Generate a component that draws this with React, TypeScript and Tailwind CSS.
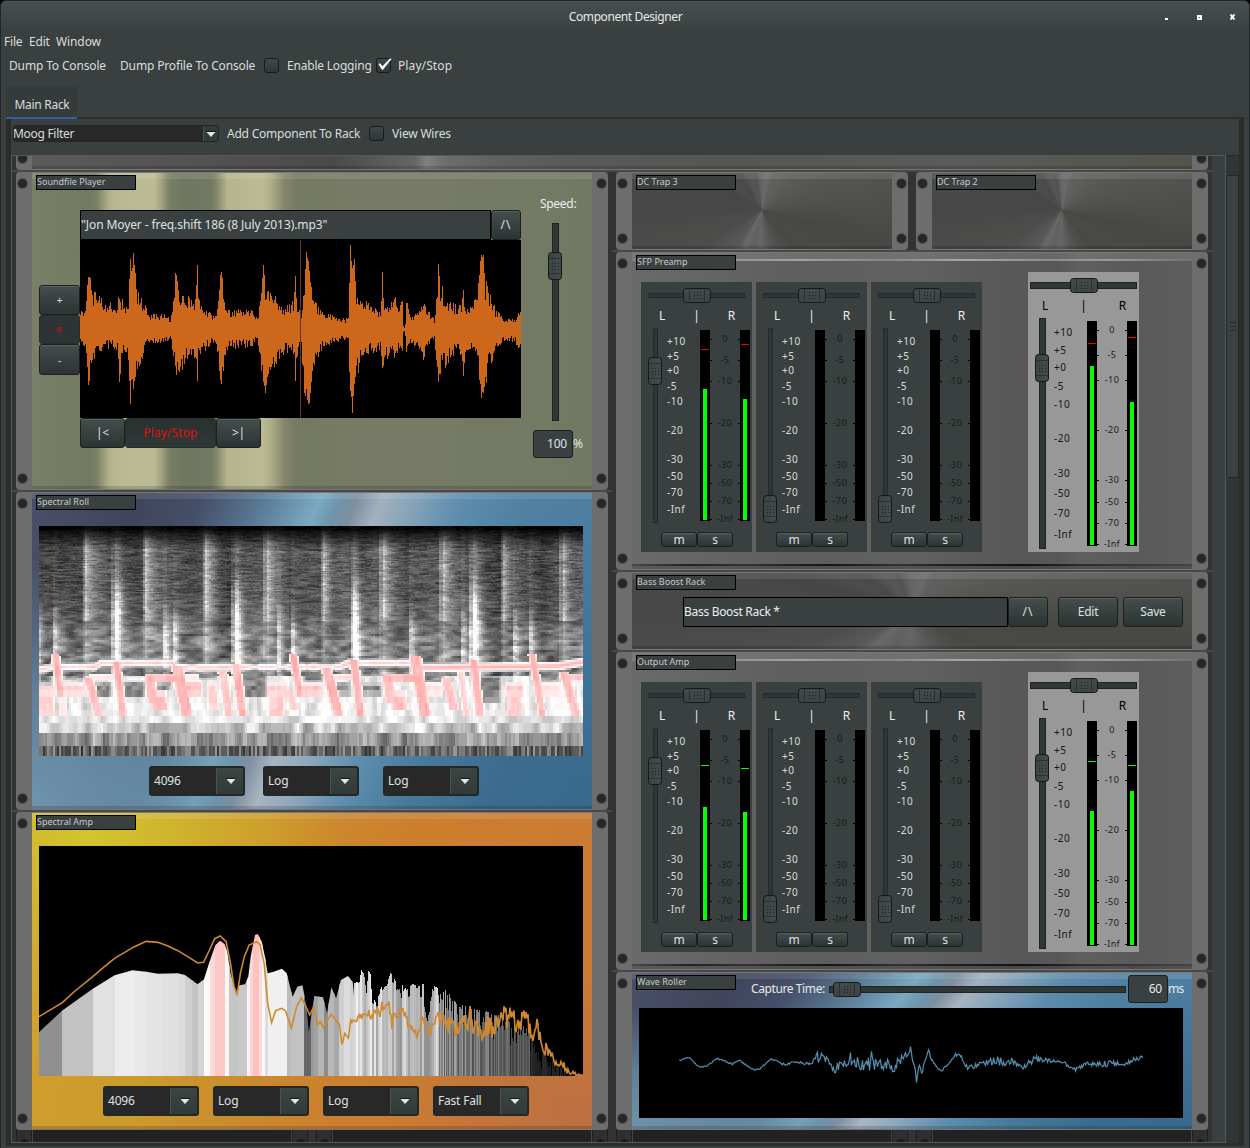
import React from "react";

/* ---------- deterministic noise ---------- */
function hash(a: number, b = 0) {
  const s = Math.sin(a * 127.1 + b * 311.7 + 17.3) * 43758.5453;
  return s - Math.floor(s);
}
function smoothNoise(x: number, y: number) {
  const xi = Math.floor(x);
  const yi = Math.floor(y);
  const fx = x - xi;
  const fy = y - yi;
  const a = hash(xi, yi) * (1 - fx) + hash(xi + 1, yi) * fx;
  const b = hash(xi, yi + 1) * (1 - fx) + hash(xi + 1, yi + 1) * fx;
  return a * (1 - fy) + b * fy;
}
function lerpPoints(pts: number[][], x: number, k = 1) {
  if (x <= pts[0][0]) return pts[0][k];
  for (let i = 1; i < pts.length; i++) {
    if (x <= pts[i][0]) {
      const a = pts[i - 1];
      const b = pts[i];
      return a[k] + ((b[k] - a[k]) * (x - a[0])) / (b[0] - a[0]);
    }
  }
  return pts[pts.length - 1][k];
}

/* ---------- basic controls ---------- */
const dots = [0, 1, 2];

function Thumb({ vertical = false }: { vertical?: boolean }) {
  return (
    <svg width={vertical ? 14 : 28} height={vertical ? 28 : 15} className="block">
      <g transform={vertical ? "translate(14 0) rotate(90)" : ""}>
        <rect x="0.5" y="0.5" width="27" height={vertical ? 13 : 14} rx="3" fill="#3d4545" stroke="#161919" />
        <rect x="1.5" y="1.5" width="25" height="5" rx="2" fill="#48514f" opacity="0.55" />
        <path d="M6.5 1.5V13M21.5 1.5V13" stroke="#2b3131" />
        {dots.map((r) =>
          [0, 1, 2].map((c) => (
            <rect key={r + "-" + c} x={11 + c * 3} y={(vertical ? 3 : 4) + r * 3} width="1" height="1" fill="#1d2121" />
          )),
        )}
      </g>
    </svg>
  );
}

function HSlider({ width, thick, at, dim }: { width: number; thick: number; at: number; dim?: boolean }) {
  return (
    <div className="relative flex h-[15px] shrink-0 items-center" style={{ width }}>
      <div
        className={"w-full border " + (dim ? "border-[#242929] bg-[#303636]" : "border-[#1e2323] bg-[#2f3737]")}
        style={{ height: thick }}
      />
      <div className="absolute top-0" style={{ left: at }}>
        <Thumb />
      </div>
    </div>
  );
}

function VSlider({ height, thick, at, dim }: { height: number; thick: number; at: number; dim?: boolean }) {
  return (
    <div className="relative flex w-[14px] shrink-0 justify-center" style={{ height }}>
      <div
        className={"h-full border " + (dim ? "border-[#242929] bg-[#303636]" : "border-[#1e2323] bg-[#2f3737]")}
        style={{ width: thick }}
      />
      <div className="absolute left-0" style={{ top: at }}>
        <Thumb vertical />
      </div>
    </div>
  );
}

function Btn({ children, className = "" }: { children: React.ReactNode; className?: string }) {
  return (
    <div
      className={
        "flex shrink-0 items-center justify-center rounded-[3px] border border-[#1b1f1f] bg-linear-to-b from-[#454d4d] via-[#384040] to-[#2d3434] text-[#dfe2e2] shadow-[inset_0_1px_0_#596262] " +
        className
      }
    >
      {children}
    </div>
  );
}

function Caret() {
  return (
    <svg width="10" height="6" className="block">
      <path d="M0 0.5H10L5 6Z" fill="#e2e6e4" />
      <path d="M0 0.5H10" stroke="#151818" />
    </svg>
  );
}

function Combo({ text }: { text: string }) {
  return (
    <div className="flex h-[30px] w-[96px] shrink-0 overflow-hidden rounded-[3px] border-2 border-[#222828] bg-[#282828] text-[#dfe2e2]">
      <div className="flex w-[65px] items-center pl-[3px]">{text}</div>
      <div className="flex flex-1 items-center justify-center border-l border-[#4a5252] bg-linear-to-b from-[#3c4444] to-[#333a3a] pl-px">
        <Caret />
      </div>
    </div>
  );
}

function CheckBox({ on = false }: { on?: boolean }) {
  return (
    <div className="relative h-[15px] w-[15px] shrink-0 rounded-[3px] border border-[#181b1b] bg-linear-to-b from-[#3f4747] to-[#303737]">
      {on && (
        <svg width="17" height="14" className="absolute -top-[1px] left-0 overflow-visible">
          <path d="M1.5 6L3.2 5.2L5.4 8.3L12.6 0.8H14.8L6 11.8H4.8Z" fill="#fff" />
        </svg>
      )}
    </div>
  );
}

/* ---------- rack module frame ---------- */
function Hole() {
  return <div className="h-[9px] w-[9px] rounded-full bg-[#262626] shadow-[0_0_0_1px_#555]" />;
}

function Ear({ right = false }: { right?: boolean }) {
  return (
    <div
      className={
        "flex w-4 shrink-0 flex-col items-center justify-between bg-[#6d6d6d] pt-[7px] pb-[7px] " +
        (right ? "rounded-r-[4px] pl-[2px]" : "rounded-l-[4px] pr-[3px]")
      }
    >
      <Hole />
      <Hole />
    </div>
  );
}

function Module({
  title,
  span,
  back,
  children,
}: {
  title?: string;
  span: string;
  back: React.ReactNode;
  children?: React.ReactNode;
}) {
  return (
    <div className={"flex border-t-2 border-[#484848] px-1 " + span}>
      <Ear />
      <div className="relative min-w-0 flex-1 overflow-hidden border-y border-[#777]">
        <div className="absolute inset-0 overflow-hidden">{back}</div>
        <div className="absolute inset-x-0 top-0 h-[6px] bg-white/10" />
        <div className="absolute inset-x-0 bottom-0 h-[3px] bg-black/15" />
        <div className="relative h-full">{children}</div>
        {title && (
          <div className="absolute top-[2px] left-1 h-[15px] w-[100px] border border-black bg-[#3a4040] text-[9px] leading-[12px] tracking-[0px] text-[#c6caca]">
            {title}
          </div>
        )}
      </div>
      <Ear right />
    </div>
  );
}

function BayRail() {
  return (
    <div className="flex w-4 justify-center border-x border-[#202020] bg-[#2f2f2f] pt-[9px]">
      <div className="h-[9px] w-[9px] rounded-full bg-[#1c1c1c]" />
    </div>
  );
}

function Bay() {
  return (
    <div className="flex px-1">
      <BayRail />
      <div className="flex-1 border-x border-[#454545] bg-[#222]" />
      <BayRail />
    </div>
  );
}

/* ---------- panel backgrounds ---------- */
const conic =
  "bg-[conic-gradient(from_0deg_at_50%_49%,#666_0deg,#6a6a6a_10deg,#606060_16deg,#5e5e5c_30deg,#5a5a57_45deg,#555552_65deg,#51514e_80deg,#4b4b47_95deg,#474744_105deg,#4a4a46_125deg,#484845_140deg,#4e4e4b_155deg,#585856_168deg,#666_182deg,#606060_192deg,#686868_206deg,#585858_215deg,#555_225deg,#4d4d4c_238deg,#4c4b4a_255deg,#474747_270deg,#494949_285deg,#464646_300deg,#4c4c4c_315deg,#4a4a4a_328deg,#565656_340deg,#525252_350deg,#606060_356deg,#666_360deg)]";
const Conic = () => <div className={"h-full w-full " + conic} />;
const ConicWide = () => <div className={"h-full w-[260px] origin-left scale-x-[2.154] " + conic} />;
const Sheen = () => (
  <div className="h-full w-full bg-[linear-gradient(to_right,#5c5a5b_0%,#545253_14%,#4b494a_26%,#5a5a5a_30%,#666_33%,#808080_34%,#6e6e6e_35.5%,#616161_40%,#5a5a59_46%,#565652_60%,#5b5b59_80%,#54544c_100%)]" />
);
const Olive = () => (
  <div className="h-full w-full bg-[linear-gradient(to_right,#7a8068_0px,#727a62_58px,#7b8167_65px,#b1b28a_77px,#b9ba93_88px,#bbbb95_122px,#a3a481_129px,#787d63_138px,#6f7761_155px,#737961_178px,#7d8166_183px,#b3b48c_195px,#bbbb95_230px,#abab87_240px,#84876b_252px,#757a63_264px,#777b65_360px,#727962_560px)]" />
);
const Blue = () => (
  <div className="relative h-full w-full bg-[linear-gradient(112.4deg,#4a5069_0%,#40455b_16%,#454f69_25%,#577590_33%,#7aa9c0_42%,#6f94ab_45%,#7f8fa1_47.5%,#a9b4c1_51%,#8ea8bb_56%,#5f8eae_63%,#47799a_73%,#3b6c8f_85%,#376a8d_100%)]">
    <div className="absolute inset-0 bg-[radial-gradient(ellipse_40%_80%_at_0%_100%,#6f94ac_0%,#6a8fa8cc_45%,transparent_100%)]" />
    <div className="absolute inset-0 bg-[radial-gradient(ellipse_45%_90%_at_100%_0%,#5a8aaa_0%,transparent_100%)] opacity-60" />
  </div>
);
const BlueShort = () => (
  <div className="relative h-[316px] w-full origin-top scale-y-[0.5]">
    <Blue />
  </div>
);
const Amber = () => (
  <div className="relative h-full w-full bg-[linear-gradient(105deg,#cfa02d_0%,#cd9a2c_28%,#cb8a2d_45%,#cc7f2e_60%,#c97a34_100%)]">
    <div className="absolute inset-0 bg-[radial-gradient(ellipse_45%_75%_at_10%_8%,#d2c52f_0%,#d0b92e88_50%,transparent_100%)]" />
    <div className="absolute inset-0 bg-[radial-gradient(ellipse_35%_45%_at_97%_95%,#bd6f42_0%,transparent_100%)]" />
  </div>
);
const Brushed = () => (
  <div className="relative h-full w-full bg-[linear-gradient(to_right,#6a6a6a_0%,#656565_12%,#5e5e5e_30%,#616161_50%,#595959_64%,#575757_76%,#606060_80%,#5a5a5a_90%,#5e5e5e_100%)]">
    <div className="absolute inset-x-0 top-[6px] h-[2px] bg-[linear-gradient(to_right,#808080,#a2a2a2_30%,#868686_45%,#a8a8a8_60%,#8c8c8c_75%,#9c9c9c_85%,#707070)]" />
    <div className="absolute inset-x-0 bottom-[3px] h-[2px] bg-[linear-gradient(to_right,#4a4a4a,#222_10%,#333_20%,#151515_35%,#333_48%,#222_55%,#111_70%,#2c2c2c_80%,#444_100%)]" />
  </div>
);

/* ---------- drawings ---------- */
const playerEnv: number[][] = [
  [0, 14, 15], [5, 22, 18], [8, 55, 58], [10, 53, 48], [12, 34, 40], [15, 36, 26], [19, 28, 20], [24, 25, 17], [33, 25, 17], [37, 20, 19],
  [39, 44, 55], [41, 26, 22], [46, 20, 20], [48, 28, 30], [50, 72, 82], [51, 50, 52], [53, 79, 61], [55, 62, 52], [57, 32, 38], [60, 28, 30],
  [63, 24, 24], [69, 12, 12], [80, 13, 13], [88, 13, 11], [90, 6, 6], [92, 18, 18], [95, 55, 44], [97, 53, 50], [99, 34, 38], [106, 29, 30],
  [115, 25, 27], [117, 64, 58], [118, 30, 28], [122, 22, 22], [132, 12, 12], [137, 18, 20], [139, 48, 40], [141, 62, 57],
  [143, 30, 40], [146, 18, 18], [160, 18, 16], [170, 17, 16], [177, 11, 10], [180, 30, 26], [183, 63, 60], [185, 45, 68], [187, 36, 42],
  [195, 30, 32], [203, 17, 22], [211, 24, 18], [213, 26, 22], [215, 54, 48], [217, 24, 24], [221, 16, 16], [224, 44, 64], [226, 80, 68], [228, 69, 83],
  [231, 42, 60], [234, 25, 30], [240, 16, 20], [250, 13, 13], [265, 9, 10], [268, 12, 10], [270, 83, 66], [272, 66, 87], [274, 74, 58],
  [276, 30, 45], [280, 29, 31], [290, 21, 20], [300, 17, 20], [302, 56, 43], [304, 24, 30], [309, 22, 22], [313, 26, 24], [315, 42, 36], [317, 20, 20],
  [322, 26, 20], [323, 4, 4], [324, 1, 2], [325, 4, 6], [326, 26, 20], [330, 13, 15], [338, 14, 15], [343, 27, 28], [350, 14, 14], [354, 8, 9], [356, 30, 30], [358, 65, 58],
  [360, 44, 42], [365, 31, 33], [375, 21, 20], [380, 22, 24], [383, 33, 43], [386, 18, 18], [395, 26, 23], [398, 50, 42], [401, 79, 68],
  [403, 74, 72], [405, 44, 54], [408, 34, 36], [415, 18, 20], [422, 10, 12], [427, 9, 10], [435, 10, 11], [438, 17, 20], [441, 17, 12],
];

function PlayerWave() {
  let d = "";
  for (let x = 0; x < 441; x++) {
    const a = lerpPoints(playerEnv, x, 1);
    const b = lerpPoints(playerEnv, x, 2);
    const up = a > 50 ? a * (0.9 + 0.12 * hash(x, 1)) : a * (0.64 + 0.56 * hash(x, 1));
    const dn = b > 50 ? b * (0.88 + 0.14 * hash(x, 2)) : b * (0.64 + 0.56 * hash(x, 2));
    d += `M${x} ${Math.round(Math.max(3, 89 - up))}h1V${Math.round(Math.min(177, 89 + dn))}h-1z`;
  }
  return (
    <svg width="441" height="178" className="block bg-black" shapeRendering="crispEdges">
      <path d={d} fill="#cd671c" />
      <rect x="220" y="0" width="1" height="178" fill="#6b3230" />
    </svg>
  );
}

const highBeats = [47, 107, 167, 228, 285, 344.5, 404, 465, 524.5];
const lowBeats = [76.5, 196, 315, 433.5];
const shortBeats = [0, 16, 127, 137, 240, 254, 373, 425, 477, 492];
/* x0, x1, y0, y1, drift, strength */
const pinks: number[][] = [
  [-3, 16, 160, 168, 0, 0.55], [-3, 14, 168, 188, 2, 0.65], [13, 20, 130, 166, 5, 1], [18, 46, 158, 168, 0, 0.65], [20, 28, 168, 188, 0, 0.3],
  [45, 54, 154, 194, 12, 0.85], [50, 78, 149, 154, 0, 0.3], [74, 81, 138, 192, 7, 1], [106, 140, 148, 157, 0, 0.95], [106, 116, 156, 176, 3, 0.85],
  [110, 126, 167, 182, 3, 0.85], [133, 144, 142, 196, 11, 1], [142, 163, 157, 168, 0, 0.85], [142, 160, 149, 155, 0, 0.25], [168, 177, 158, 181, 2, 0.6],
  [180, 188, 148, 188, 6, 0.75], [193, 201, 140, 190, 7, 1], [228, 248, 158, 168, 0, 0.7], [230, 245, 167, 189, 0, 0.65], [251, 258, 130, 166, 6, 1],
  [258, 284, 158, 168, 0, 0.8], [247, 255, 164, 186, 4, 0.6], [283, 293, 144, 194, 13, 1], [290, 315, 149, 154, 0, 0.5], [311, 319, 136, 192, 7, 1],
  [344, 377, 148, 157, 0, 0.95], [344, 354, 156, 176, 3, 0.85], [350, 366, 167, 182, 3, 0.8], [371, 382, 132, 196, 11, 1], [380, 404, 158, 168, 0, 0.4],
  [403, 412, 155, 184, 8, 0.8], [419, 425, 148, 188, 6, 0.6], [431, 439, 136, 190, 6, 1], [467, 484, 158, 168, 0, 0.75], [468, 482, 167, 189, 0, 0.65],
  [490, 497, 130, 190, 10, 1], [497, 521, 158, 168, 0, 0.45], [521, 530, 148, 194, 13, 0.9], [526, 547, 148, 155, 0, 0.8],
];
/* x0, x1, y0, y1 */
const shades: number[][] = [
  [0, 13, 147, 158], [25, 46, 145, 154], [52, 72, 157, 170], [84, 106, 156, 170], [82, 104, 142, 150], [112, 132, 142, 148], [114, 132, 157, 164],
  [156, 178, 145, 153], [203, 228, 148, 172], [264, 284, 145, 156], [290, 312, 157, 168], [322, 342, 158, 168], [322, 342, 143, 150], [380, 404, 147, 157], [440, 462, 150, 176], [500, 520, 146, 156],
];
const ridge: number[][] = [[0, 144], [15, 141], [56, 141], [62, 137], [134, 137], [138, 142], [215, 141], [300, 141], [310, 137], [372, 137], [376, 142], [520, 140], [544, 136]];

/* 0 to 1 runs black to white, 1 to 2 runs white to pink */
function intensity(x: number, y: number) {
  if (y >= 220) return 0.2 + 0.4 * hash(x, 220);
  if (y >= 207) return 0.36 + 0.34 * smoothNoise(x / 5, 207) + 0.14 * hash(x, 9);
  if (y >= 197) return 0.55 + 0.42 * smoothNoise(x / 7, 197) + 0.05 * hash(x, 3);
  if (y >= 190) return 0.76 + 0.27 * smoothNoise(x / 7, 190);
  let v: number;
  if (y < 150) {
    const blob = Math.max(0, Math.min(1, (y - 60) / 60));
    const fine = smoothNoise(x / 7, y * 1.1 + 40) * 0.6 + hash(x, y) * 0.25;
    const soft = smoothNoise(x / 8, y / 3.2 + 900);
    v = 0.13 + (1 - blob) * 0.42 * fine + blob * (0.17 * fine + 0.42 * soft);
    v += 0.16 * (smoothNoise(x / 14, 7) - 0.5);
    if (y > 100) v += 0.06;
    const n = smoothNoise(x / 3, y / 1.3);
    for (const b of highBeats) {
      const d = x - b;
      if (d > -4 && d < 22) v += (d < 0 ? 0.5 : Math.exp(-d / 8)) * (y < 95 ? 0.55 : 0.24) * (0.55 + 0.5 * n);
    }
    for (const b of lowBeats) {
      const d = x - b;
      if (d > -4 && d < 22)
        v += (d < 0 ? 0.5 : Math.exp(-Math.max(0, d - 3) / 5)) * (0.22 + Math.max(0, Math.min(1, (y - 45) / 35)) * 0.55) * (0.6 + 0.5 * n);
    }
    for (const b of shortBeats) {
      const d = x - b;
      if (d > -3 && d < 12) v += Math.exp(-Math.max(0, d - 1) / 3.4) * (0.06 + 0.36 * Math.max(0, Math.min(1, (y - 75) / 30))) * (0.5 + 0.6 * n);
    }
    v = Math.min(v, 1.06);
    if (y < 24) v *= y < 4 ? 0.06 : 0.12 + (0.88 * (y - 4)) / 20;
  } else {
    v = 0.76 + 0.36 * smoothNoise(x / 4, y / 14);
  }
  for (const [x0, x1, y0, y1] of shades) {
    const e = Math.min(x - x0, x1 - x, (y - y0) * 1.2, (y1 - y) * 1.2);
    if (e > -2) v = Math.min(v, 0.98 - Math.min(1, (e + 2) / 5) * (0.3 + 0.3 * smoothNoise(x / 5, y / 3)));
  }
  const r = Math.abs(y - lerpPoints(ridge, x));
  if (r < 5) {
    const strong = x > 373;
    const s = strong ? 1 : smoothNoise(x / 7, 31);
    const weak = x > 205 && x < 296 ? 0.7 + 0.3 * smoothNoise(x / 6, 77) : 1;
    v = Math.max(v, weak * Math.min(1.75, (1.35 - r / 5.5) * (0.95 + (strong ? 0.45 : s * 0.35))));
  }
  for (const [x0, x1, y0, y1, drift, s] of pinks) {
    if (y < y0 - 2 || y > y1 + 2) continue;
    const o = drift * ((y - y0) / (y1 - y0));
    const e = Math.min(x - x0 - o, x1 + o - x + 0, y - y0, y1 - y) + 1;
    const band = Math.min(x - x0 - o, x1 + o - x, (x1 - x0) / 2);
    const k = drift > 4 ? Math.min(x - x0 - o, x0 + (x1 - x0) + o - x, 99) + 1 : e;
    if (k > 0 && band > -1) v = Math.max(v, 1 + Math.min(1, k / 2.5) * s * (0.55 + 0.5 * smoothNoise(x / 3, y / 9)));
  }
  return v;
}

function SpectralRollPlot() {
  const buckets: string[] = [];
  let y = 0;
  while (y < 230) {
    const h = y < 100 ? 1 : y < 156 ? 2 : y < 164 ? 4 : y < 190 ? 6.5 : y < 197 ? 7 : y < 207 ? 10 : y < 220 ? 13 : 10;
    let start = 0;
    let last = -1;
    for (let x = 0; x <= 544; x += 2) {
      const k = x === 544 ? -2 : Math.max(0, Math.min(44, Math.round(intensity(x + 1, y + h / 2) * 22)));
      if (k !== last) {
        if (last >= 0) buckets[last] = (buckets[last] || "") + `M${start} ${y}H${x}v${h}H${start}z`;
        start = x;
        last = k;
      }
    }
    y += h;
  }
  return (
    <svg width="544" height="230" className="block bg-black" shapeRendering="crispEdges">
      {buckets.map((d, k) => {
        const c = Math.round((k / 22) * 255);
        const q = Math.round(255 - ((k - 22) / 22) * 92);
        return <path key={k} d={d} fill={k > 22 ? `rgb(255,${q},${q})` : `rgb(${c},${c},${c})`} />;
      })}
    </svg>
  );
}

const ampShape =
  "M99 828V697L157 632L235 566L290 526L335 511L370 515L400 521L450 520L468 525L485 540L500 553L516 538L530 485L545 435L557 422L568 432L575 455L583 520L597 580L605 556L620 553L628 530L634 470L645 405L652 402L662 425L670 470L677 520L690 516L713 506L725 520L740 590L752 560L765 556L775 620L781 697L788 640L795 588L817 592L827 640L838 562L850 595L862 540L880 528L892 546L896 598V828Z";
const ampBands: [number, string][] = [
  [99, "#909090"], [157, "#c2c2c2"], [235, "#e1e1e1"], [291, "#ececec"], [341, "#e8e8e8"], [370, "#e4e4e4"], [410, "#e0e0e0"], [450, "#dcdcdc"],
  [468, "#cfcfcf"], [486, "#c3c3c3"], [502, "#d4d4d4"], [516, "#fdfafa"], [531, "#ffd8d8"], [543, "#ffc8c8"], [569, "#fff6f6"], [580, "#c4c4c4"],
  [600, "#c8c8c8"], [625, "#fff4f4"], [632, "#ffd5d5"], [640, "#ffc0c0"], [656, "#ffdcdc"], [663, "#fff8f8"], [671, "#dddddd"], [677, "#f0f0f0"],
  [727, "#bbbbbb"], [737, "#c2c2c2"], [770, "#666666"], [786, "#9a9a9a"], [795, "#a2a2a2"], [805, "#b5b5b5"], [820, "#8c8c8c"], [830, "#b8b8b8"], [845, "#a8a8a8"], [858, "#d0d0d0"], [870, "#dcdcdc"], [884, "#d2d2d2"], [898, "#000"],
];
const ampTop: number[][] = [
  [896, 546], [908, 546], [914, 506], [922, 512], [927, 580], [930, 506], [936, 515], [940, 585], [950, 606], [964, 560], [978, 540], [988, 512], [1000, 535],
  [1012, 520], [1020, 570], [1040, 542], [1070, 545], [1080, 600], [1093, 543], [1115, 580], [1130, 568], [1150, 605], [1180, 618], [1230, 634], [1280, 650], [1330, 680], [1360, 735], [1400, 780], [1440, 822], [1474, 828],
];
const ampLine: number[][] = [
  [99, 650], [158, 608], [190, 573], [235, 530], [262, 502], [290, 475], [340, 440], [370, 424], [400, 427], [425, 438], [450, 452], [475, 470], [500, 489], [515, 487],
  [530, 450], [543, 416], [557, 408], [572, 425], [583, 490], [592, 560], [600, 583], [608, 520], [618, 470], [630, 435], [650, 425], [658, 435], [668, 490],
  [677, 610], [687, 668], [697, 632], [712, 625], [722, 632], [737, 685], [750, 620], [762, 594], [772, 615], [783, 645], [793, 622], [803, 675], [810, 665],
  [818, 683], [828, 660], [838, 643], [850, 662], [858, 672], [865, 733], [872, 700], [881, 714], [887, 660],
];
/* x, centre, spread */
const ampTail: number[][] = [
  [890, 662, 12], [925, 650, 18], [930, 640, 30], [950, 652, 32], [966, 620, 28], [985, 612, 30], [990, 660, 48], [1000, 645, 20], [1020, 640, 20], [1055, 700, 28], [1067, 650, 20],
  [1080, 690, 18], [1096, 700, 30], [1105, 645, 20], [1130, 665, 42], [1150, 690, 28], [1190, 665, 40], [1240, 680, 40], [1260, 660, 36], [1340, 675, 42], [1350, 700, 40], [1358, 670, 30], [1370, 735, 25], [1385, 750, 22], [1400, 785, 18], [1440, 815, 12], [1455, 824, 4], [1474, 826, 2],
];

function SpectralAmpPlot() {
  const bars: React.ReactNode[] = [];
  for (let x = 896, i = 0; x < 1474; x += 2.528, i++) {
    const g = x < 1110 ? Math.floor(i / 2) : i;
    const n = hash(g, 4);
    const spread = x < 1000 ? 28 : x < 1110 ? 70 : 80;
    const top = Math.min(828, lerpPoints(ampTop, x) + spread * n * n);
    const fade = Math.max(0, Math.min(1, 1 - (x - 1110) / 330));
    const c =
      x < 1110
        ? Math.round(160 + 82 * (1 - n) - (x > 1000 ? 20 : 0))
        : Math.round((88 + 90 * (1 - n)) * (0.4 + 0.6 * fade) * (x > 1340 ? 0.5 : 1));
    bars.push(<rect key={i} x={x} y={top} width="2.6" height={828 - top} fill={`rgb(${c},${c},${c})`} />);
  }
  let d = "M" + ampLine.map((p) => p.join(" ")).join("L");
  for (let x = 890, i = 0; x < 1474; x += 2.528, i++) {
    const k = (smoothNoise(i / 2, 8) - 0.5) * 1.1 + (hash(i, 12) - 0.5) * (x > 1110 ? 1.7 : 0.9);
    d += `L${x.toFixed(1)} ${Math.min(826, lerpPoints(ampTail, x, 1) + k * lerpPoints(ampTail, x, 2)).toFixed(1)}`;
  }
  return (
    <svg width="544" height="230" viewBox="99 138 1375 690" preserveAspectRatio="none" className="block bg-black">
      <defs>
        <clipPath id="amp-shape">
          <path d={ampShape} />
        </clipPath>
      </defs>
      <g clipPath="url(#amp-shape)" shapeRendering="crispEdges">
        {ampBands.slice(0, -1).map(([x, c], i) => (
          <rect key={x} x={x} y="138" width={ampBands[i + 1][0] - x + 1} height="690" fill={c} />
        ))}
      </g>
      <g shapeRendering="crispEdges">{bars}</g>
      <path d={d} fill="none" stroke="#d08a2d" strokeWidth="1.6" vectorEffect="non-scaling-stroke" />
    </svg>
  );
}

/* x, centre, jitter */
const rollLine: number[][] = [
  [165, 332, 2], [183, 324, 2], [192, 326, 2], [212, 350, 2], [232, 350, 2], [258, 325, 2], [295, 341, 3], [315, 333, 3], [345, 359, 2], [362, 358, 2],
  [390, 326, 2], [425, 345, 3], [450, 335, 3], [490, 345, 5], [500, 330, 14], [503, 300, 3], [507, 335, 10], [515, 308, 5], [521, 330, 12], [530, 335, 12],
  [541, 350, 12], [547, 370, 2], [554, 345, 18], [570, 345, 12], [582, 340, 8], [585, 300, 1], [588, 340, 10], [600, 335, 14], [615, 345, 18], [630, 342, 20],
  [635, 342, 16], [638, 292, 1], [641, 350, 16], [660, 340, 16], [685, 350, 18], [692, 362, 4], [702, 340, 20], [712, 320, 20], [724, 315, 14], [730, 315, 8], [733, 286, 2], [738, 325, 12],
  [745, 350, 6], [748, 398, 1], [753, 345, 8], [761, 368, 5], [768, 340, 6], [778, 300, 3], [784, 330, 5], [795, 345, 5], [810, 361, 4], [828, 338, 5],
  [842, 314, 5], [858, 320, 5], [872, 352, 6], [890, 350, 6], [908, 338, 6], [935, 335, 13], [970, 332, 14], [985, 336, 8], [1010, 355, 5], [1025, 335, 9],
  [1045, 326, 12], [1060, 330, 6], [1100, 332, 5], [1120, 345, 5], [1140, 357, 7], [1165, 338, 7], [1190, 343, 8], [1230, 341, 9], [1260, 340, 6], [1285, 328, 6], [1304, 322, 6],
];

function WaveRollerPlot() {
  let d = "";
  for (let x = 165, i = 0; x <= 1304; x += 2.46, i++) {
    const yy = lerpPoints(rollLine, x, 1) + (hash(i, 6) - 0.5) * 2.2 * lerpPoints(rollLine, x, 2);
    d += (i ? "L" : "M") + x.toFixed(1) + " " + yy.toFixed(1);
  }
  return (
    <svg width="544" height="110" viewBox="66 174 1337 330" preserveAspectRatio="none" className="block bg-black">
      <path d={d} fill="none" stroke="#5590b0" strokeWidth="1.2" vectorEffect="non-scaling-stroke" />
    </svg>
  );
}

/* ---------- mixer strips ---------- */
const faderLabels = ["+10", "+5", "+0", "-5", "-10", "-20", "-30", "-50", "-70", "-Inf"];
const meterLabels = ["0", "-5", "-10", "-20", "-30", "-50", "-70", "-Inf"];
const stripFaderY = [13.5, 28.5, 42.5, 58, 73, 102, 131, 148, 164, 181];
const stripMeterY = [9, 30, 51, 93, 135, 153, 171, 189];
const masterFaderY = [14.5, 32.5, 49.5, 68, 86, 120.5, 155.5, 175.5, 195.5, 216];
const masterMeterY = [9, 34, 59, 109, 159, 181, 202, 223];

type Level = { top: number; peak: number; color: string };

function MeterBar({ height, level }: { height: number; level?: Level }) {
  return (
    <div className="relative w-[10px] shrink-0 bg-black" style={{ height }}>
      {level && (
        <>
          <div className={"absolute left-px h-px w-2 " + level.color} style={{ top: level.peak }} />
          <div className="absolute bottom-px left-[3px] w-1 bg-[#00ff00]" style={{ top: level.top }} />
        </>
      )}
    </div>
  );
}

function Meter({ height, marks, left, right, tone }: { height: number; marks: number[]; left?: Level; right?: Level; tone: string }) {
  return (
    <div className="flex w-[50px] shrink-0">
      <MeterBar height={height} level={left} />
      <div className={"relative w-[30px] text-[9px] leading-[12px] tracking-[0.4px] " + tone}>
        {marks.map((m, i) => (
          <div key={i} className="absolute inset-x-0 flex h-3 items-center justify-between" style={{ top: m - 6 }}>
            <span className="h-px w-[2px] bg-black" />
            <span>{meterLabels[i]}</span>
            <span className="h-px w-[2px] bg-black" />
          </div>
        ))}
      </div>
      <MeterBar height={height} level={right} />
    </div>
  );
}

function FaderScale({ marks, tone }: { marks: number[]; tone: string }) {
  return (
    <div className={"relative w-[33px] shrink-0 text-[10px] leading-[12px] tracking-[0.5px] " + tone}>
      {marks.map((m, i) => (
        <span key={i} className="absolute left-0" style={{ top: m - 6.5 }}>
          {faderLabels[i]}
        </span>
      ))}
    </div>
  );
}

function Strip({ at, left, right }: { at: number; left?: Level; right?: Level }) {
  return (
    <div className="h-[270px] w-[111px] shrink-0 bg-[#3a4040] pt-[6px]">
      <div className="pl-[7px]">
        <HSlider width={97} thick={5} at={35} dim />
      </div>
      <div className="mt-[6px] flex h-[14px] items-center justify-between pr-[17px] pl-[18px] leading-[14px] text-[#eceeee]">
        <span>L</span>
        <span>|</span>
        <span>R</span>
      </div>
      <div className="mt-[5px] flex h-[195px] pl-[7px]">
        <VSlider height={195} thick={5} at={at} dim />
        <div className="w-[5px]" />
        <FaderScale marks={stripFaderY} tone="text-[#d9dcdc]" />
        <div className="pt-[2px]">
          <Meter height={191} marks={stripMeterY} left={left} right={right} tone="text-[#171b1b]" />
        </div>
      </div>
      <div className="mt-[9px] flex pl-5">
        <Btn className="h-[15px] w-9">m</Btn>
        <Btn className="h-[15px] w-9">s</Btn>
      </div>
    </div>
  );
}

function Master({ left, right }: { left: Level; right: Level }) {
  return (
    <div className="h-[280px] w-[111px] shrink-0 bg-[#989898] pt-[6px] text-black">
      <div className="pl-[2px]">
        <HSlider width={107} thick={7} at={40} />
      </div>
      <div className="mt-[6px] flex h-[14px] items-center justify-between pr-[13px] pl-[14px] leading-[14px]">
        <span>L</span>
        <span>|</span>
        <span>R</span>
      </div>
      <div className="mt-[5px] flex h-[231px] pl-[7px]">
        <VSlider height={231} thick={7} at={36} />
        <div className="w-[5px]" />
        <FaderScale marks={masterFaderY} tone="text-[#151515]" />
        <div className="pt-[3px]">
          <Meter height={225} marks={masterMeterY} left={left} right={right} tone="text-[#1c1c1c]" />
        </div>
      </div>
    </div>
  );
}

function Mixer({ left, right, mLeft, mRight }: { left: Level; right: Level; mLeft: Level; mRight: Level }) {
  return (
    <div className="flex h-[299px] items-end pl-[9px]">
      <div className="flex gap-1">
        <Strip at={29} left={left} right={right} />
        <Strip at={167} />
        <Strip at={167} />
      </div>
      <div className="ml-[46px]">
        <Master left={mLeft} right={mRight} />
      </div>
    </div>
  );
}

const red = "bg-[#ee0000]";
const green = "bg-[#00ff00]";

/* ---------- modules ---------- */
function SoundfilePlayer() {
  return (
    <div className="flex pt-[25px] pl-[7px]">
      <div className="mt-[87px] flex w-[41px] flex-col text-[10px]">
        <Btn className="h-[30px]">+</Btn>
        <div className="flex h-[29px] items-center justify-center rounded-[3px] border border-[#262d2d] bg-[#2c3434]">
          <svg width="5" height="5" shapeRendering="crispEdges">
            <path d="M0 0H5V1H0ZM0 2H5V3H0ZM0 4H5V5H0Z" fill="#8e2222" />
            <path d="M0 1H5V2H0ZM0 3H5V4H0Z" fill="#6c2424" />
          </svg>
        </div>
        <Btn className="h-[31px]">-</Btn>
      </div>
      <div className="mt-[12px] w-[441px]">
        <div className="flex h-[30px]">
          <div className="flex w-[411px] items-center border border-black bg-[#3a4040] tracking-[-0.1px] text-[#dfe2e2]">
            "Jon Moyer - freq.shift 186 (8 July 2013).mp3"
          </div>
          <Btn className="h-[30px] w-[30px] tracking-[1px]">/\</Btn>
        </div>
        <PlayerWave />
        <div className="flex">
          <Btn className="h-[30px] w-[45px]">|&lt;</Btn>
          <div className="flex h-[30px] w-[91px] items-center justify-center rounded-[3px] border border-[#262d2d] bg-linear-to-b from-[#283030] to-[#303838] tracking-[0.1px] text-[#e01010]">
            Play/Stop
          </div>
          <Btn className="h-[30px] w-[45px]">&gt;|</Btn>
        </div>
      </div>
      <div className="ml-[12px] flex w-[54px] flex-col">
        <div className="-mt-px h-[15px] pl-[7px] leading-[14px] tracking-[-0.3px] text-[#eceeee]">Speed:</div>
        <div className="mt-[11px] ml-[15px]">
          <VSlider height={198} thick={7} at={29} />
        </div>
        <div className="mt-[9px] flex items-center text-[#dfe2e2]">
          <div className="flex h-7 w-10 shrink-0 items-center justify-end rounded-[3px] border border-[#1a1e1e] bg-[#3a4040] pr-[5px]">100</div>
          <span>%</span>
        </div>
      </div>
    </div>
  );
}

function SpectralRoll() {
  return (
    <div className="pt-[33px] pl-[7px]">
      <SpectralRollPlot />
      <div className="mt-[10px] flex pl-[110px]">
        <Combo text="4096" />
        <div className="w-[18px]" />
        <Combo text="Log" />
        <div className="w-6" />
        <Combo text="Log" />
      </div>
    </div>
  );
}

function SpectralAmp() {
  return (
    <div className="pt-[33px] pl-[7px]">
      <SpectralAmpPlot />
      <div className="mt-[10px] flex gap-[14px] pl-[64px]">
        <Combo text="4096" />
        <Combo text="Log" />
        <Combo text="Log" />
        <Combo text="Fast Fall" />
      </div>
    </div>
  );
}

function BassBoost() {
  return (
    <div className="flex pt-[24px] pl-[51px]">
      <div className="flex h-[30px] w-[325px] items-center border border-black bg-[#3a4040] tracking-[-0.3px] text-[#eceeee]">Bass Boost Rack *</div>
      <Btn className="h-[30px] w-10 tracking-[1px]">/\</Btn>
      <Btn className="ml-[10px] h-[30px] w-[60px]">Edit</Btn>
      <Btn className="ml-[5px] h-[30px] w-[60px]">Save</Btn>
    </div>
  );
}

function WaveRoller() {
  return (
    <div className="pt-[2px] pl-[7px]">
      <div className="flex h-7 items-center pl-[112px] text-[#e6e9e9]">
        <span className="w-[78px] tracking-[-0.4px]">Capture Time:</span>
        <HSlider width={297} thick={7} at={4} />
        <div className="ml-[2px] flex h-7 w-10 items-center justify-end rounded-[3px] border border-[#1a1e1e] bg-[#3a4040] pr-[5px]">60</div>
        <span className="tracking-[-0.7px]">ms</span>
      </div>
      <div className="mt-[5px]">
        <WaveRollerPlot />
      </div>
    </div>
  );
}

/* ---------- window ---------- */
export default function App() {
  return (
    <div className="h-[1148px] w-[1250px] bg-black">
      <div className="flex h-[1148px] w-[1250px] flex-col overflow-hidden rounded-t-[6px] border border-b-0 border-[#222626] bg-[#3a3f3f] font-['Noto_Sans',sans-serif] text-[12px] leading-[16px] tracking-[-0.2px] whitespace-nowrap text-[#d9dddd]">
        <div className="relative flex h-8 shrink-0 items-center justify-center bg-linear-to-b from-[#465050] to-[#3a3f3f] pl-px tracking-[-0.4px] text-[#e6eaea]">
          Component Designer
          <div className="absolute top-[13px] right-[13px] flex h-[6px] w-[71px] items-center justify-between">
            <span className="mt-[4px] h-[2px] w-[3px] bg-white" />
            <svg width="5" height="5">
              <rect x="1" y="1" width="3" height="3" fill="none" stroke="#fff" strokeWidth="2" />
            </svg>
            <svg width="6" height="6">
              <path d="M0.5 0.5L4.5 5.5M4.5 0.5L0.5 5.5" stroke="#fff" strokeWidth="2" />
            </svg>
          </div>
        </div>
        <div className="flex h-[17px] shrink-0 items-center pt-px pl-[3px]">
          <span className="w-[25px]">File</span>
          <span className="w-[27px]">Edit</span>
          <span className="tracking-[-0.1px]">Window</span>
        </div>
        <div className="flex h-[31px] shrink-0 items-center pl-2">
          <span className="w-[111px] tracking-[-0.15px]">Dump To Console</span>
          <span className="w-[144px] tracking-[-0.15px]">Dump Profile To Console</span>
          <CheckBox />
          <span className="w-[97px] pl-2">Enable Logging</span>
          <CheckBox on />
          <span className="pl-[7px] tracking-[0.1px]">Play/Stop</span>
        </div>
        <div className="mt-[5px] ml-[5px] flex h-[31px] w-[71px] shrink-0 items-center justify-center bg-[#353a3a] pt-[6px] pl-px tracking-[-0.3px]">Main Rack</div>
        <div className="relative mr-[5px] ml-[5px] flex h-[1029px] shrink-0 flex-col border-x-[5px] border-t-2 border-b-[3px] border-[#2c2c2c] bg-[#3a4040]">
          <div className="absolute -top-[2px] -left-[5px] h-[2px] w-[71px] bg-[#2f60a3]" />
          <div className="flex h-9 shrink-0 items-center pb-[7px] pl-[2px]">
            <div className="flex h-[17px] w-[206px] overflow-hidden rounded-[3px] border border-[#222626] bg-[#282828]">
              <span className="-ml-px w-[190px] leading-[15px] tracking-[-0.3px]">Moog Filter</span>
              <div className="flex flex-1 items-center justify-center border-l border-[#4a5252] bg-[#343b3b]">
                <Caret />
              </div>
            </div>
            <span className="w-[150px] pl-2 tracking-[-0.22px]">Add Component To Rack</span>
            <CheckBox />
            <span className="pl-2">View Wires</span>
          </div>
          <div className="flex min-h-0 flex-1">
            <div className="w-[1215px] shrink-0 overflow-hidden border border-[#4d5c5b]">
              <div className="-mt-[66px] grid w-[1200px] auto-rows-[80px] grid-cols-4 bg-[#333]">
                <Module span="col-span-4" back={<Sheen />} />
                <Module title="Soundfile Player" span="col-span-2 row-span-4" back={<Olive />}>
                  <SoundfilePlayer />
                </Module>
                <Module title="DC Trap 3" span="" back={<Conic />} />
                <Module title="DC Trap 2" span="" back={<Conic />} />
                <Module title="SFP Preamp" span="col-span-2 row-span-4" back={<Brushed />}>
                  <Mixer
                    left={{ top: 59, peak: 19, color: red }}
                    right={{ top: 69, peak: 14, color: red }}
                    mLeft={{ top: 45, peak: 22, color: red }}
                    mRight={{ top: 81, peak: 16, color: red }}
                  />
                </Module>
                <Module title="Spectral Roll" span="col-span-2 row-span-4" back={<Blue />}>
                  <SpectralRoll />
                </Module>
                <Module title="Bass Boost Rack" span="col-span-2" back={<ConicWide />}>
                  <BassBoost />
                </Module>
                <Module title="Output Amp" span="col-span-2 row-span-4" back={<Brushed />}>
                  <Mixer
                    left={{ top: 77, peak: 35, color: green }}
                    right={{ top: 82, peak: 38, color: green }}
                    mLeft={{ top: 90, peak: 40, color: green }}
                    mRight={{ top: 70, peak: 44, color: green }}
                  />
                </Module>
                <Module title="Spectral Amp" span="col-span-2 row-span-4" back={<Amber />}>
                  <SpectralAmp />
                </Module>
                <Module title="Wave Roller" span="col-span-2 row-span-2" back={<BlueShort />}>
                  <WaveRoller />
                </Module>
                <Bay />
                <Bay />
                <Bay />
                <Bay />
              </div>
            </div>
            <div className="flex flex-1 flex-col bg-[#303636]">
              <div className="h-5 border-t border-[#252a2a]" />
              <div className="flex h-[303px] flex-col items-center justify-center gap-[3px] border border-[#222727] bg-[#3a4141]">
                {dots.map((i) => (
                  <span key={i} className="h-px w-[6px] bg-[#262c2c]" />
                ))}
              </div>
            </div>
          </div>
        </div>
      </div>
    </div>
  );
}
